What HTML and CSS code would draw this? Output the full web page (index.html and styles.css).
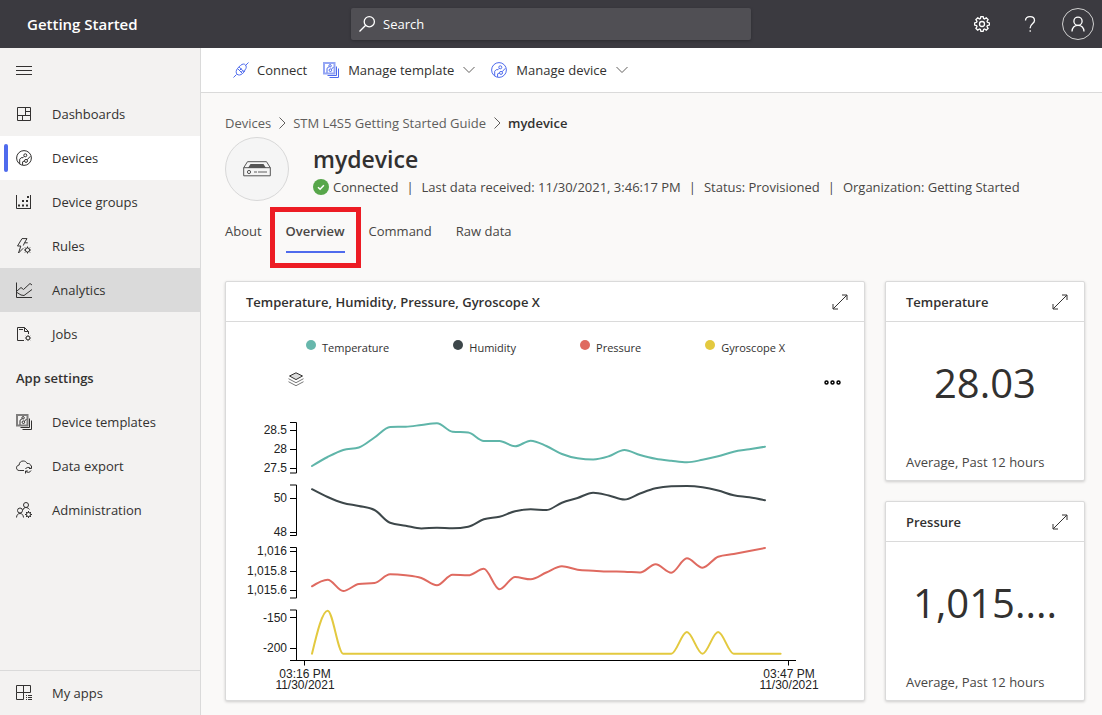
FILE: index.html
```
<!DOCTYPE html>
<html lang="en">
<head>
<meta charset="utf-8">
<title>Getting Started</title>
<meta name="viewport" content="width=device-width, initial-scale=1">
<link rel="stylesheet" href="styles.css">
</head>
<body>
<svg class="defs" aria-hidden="true">
  <symbol id="i-circuit" viewBox="0 0 16 16">
    <circle cx="8" cy="8" r="7.4"/><circle cx="9.3" cy="5.3" r="1.5"/><circle cx="10" cy="10.9" r="1.5"/>
    <path d="M8.2 6.4 7 7.7H5.2L3.7 9.2v4.9M11.1 9.8l3.2-3.5M6.6 15v-3.2l1.9-.9"/>
  </symbol>
  <symbol id="i-template" viewBox="0 0 16 16">
    <path d="M1 1h10.5v10.5H1z" class="thick"/>
    <circle cx="7.1" cy="3.8" r="1.2"/><circle cx="7.4" cy="8.2" r="1.3"/>
    <path d="M6.1 4.7 4 6.3v4.5M8.4 7.3l2.2-2.4M13.5 4.5v9h-9M15.5 6.5v9h-9"/>
  </symbol>
  <symbol id="i-gear" viewBox="0 0 16 16">
    <circle cx="8" cy="8" r="2.5"/>
    <path d="M6.900.500h2.200l.5 2 .9.4 1.800-1.100 1.800 1.800-1.100 1.800.4.9 2 .6v2.200l-2 .5-.4.9 1.100 1.800-1.800 1.800-1.800-1.100-.9.4-.5 2H6.900l-.5-2-.9-.4-1.800 1.100-1.800-1.800 1.100-1.800-.4-.9-2-.5V6.900l2-.6.4-.9-1.100-1.800 1.800-1.800 1.800 1.100.9-.4z"/>
  </symbol>
  <symbol id="i-minigear" viewBox="0 0 16 16">
    <circle cx="8" cy="8" r="4.2"/>
    <path d="M8 1v3M8 12v3M1 8h3M12 8h3M3 3l2 2M11 11l2 2M13 3l-2 2M5 11l-2 2"/>
  </symbol>
  <symbol id="i-expand" viewBox="0 0 16 16">
    <path d="M1.2 14.8 14.8 1.2M10 1h5v5M1 10v5h5"/>
  </symbol>
  <symbol id="i-down" viewBox="0 0 12 8"><path d="M.5 1 6 6.5 11.500 1"/></symbol>
  <symbol id="i-right" viewBox="0 0 8 12"><path d="M1.500.5 7 6 1.500 11.500"/></symbol>
</svg>

<header class="topbar">
  <div class="brand">Getting Started</div>
  <label class="search">
    <svg class="icon" viewBox="0 0 16 16" aria-hidden="true"><circle cx="10.300" cy="5.700" r="5.100"/><path d="M6.700 9.300.5 15.500"/></svg>
    <input type="search" placeholder="Search" aria-label="Search">
  </label>
  <div class="tools">
    <button class="tool" aria-label="Settings"><svg class="icon"><use href="#i-gear"/></svg></button>
    <button class="tool" aria-label="Help"><svg class="icon" viewBox="0 0 16 16"><path d="M3.500 4.500C3.600 2 5.400.6 8 .6s4.500 1.500 4.500 3.800c0 3.200-4.300 3.600-4.300 7.300v.6M8.200 14.200v1.600"/></svg></button>
    <button class="avatar" aria-label="Account"><svg class="icon" viewBox="0 0 16 16"><circle cx="8" cy="5.200" r="4.100"/><path d="M2 15.500c.2-3.900 2.600-6.200 6-6.200s5.800 2.300 6 6.200"/></svg></button>
  </div>
</header>

<div class="shell">
  <nav class="sidebar" aria-label="Main">
    <button class="nav-item" aria-label="Toggle navigation"><svg class="icon" viewBox="0 0 16 16"><path d="M0 4.500h16M0 8.500h16M0 12.500h16"/></svg></button>
    <a class="nav-item" href="#"><svg class="icon" viewBox="0 0 16 16"><path d="M1.500 1.500h13v13h-13zM9.500 1.500v8M1.500 9.500h13M9.500 5.500h5M6.500 9.500v5"/></svg>Dashboards</a>
    <a class="nav-item current" href="#" aria-current="page"><svg class="icon"><use href="#i-circuit"/></svg>Devices</a>
    <a class="nav-item" href="#"><svg class="icon" viewBox="0 0 16 16"><path d="M.5 1v13.500H15M14.500 1v13.500"/><path class="solid" d="M2 10.500h2v2H2zM6 10.500h2v2H6zM6 6h2v2H6zM10 10.500h2v2h-2zM10 6h2v2h-2zM11 2h2v2h-2z"/></svg>Device groups</a>
    <a class="nav-item" href="#"><svg class="icon" viewBox="0 0 16 16"><path d="M6 .6h5L8.500 4.800h3.200M6 .6 1.500 8h3.300L2.500 15l4.800-4.800M8.500 4.800 7.300 7.500"/><use href="#i-minigear" x="7.500" y="8" width="8" height="8" class="heavy"/></svg>Rules</a>
    <a class="nav-item hover" href="#"><svg class="icon" viewBox="0 0 16 16"><path d="M.5.5v15H16M1 9l4-3.500 2.500 2L14 1.500 16 3M1 10.500l4 2.500 3 .5 8-6"/></svg>Analytics</a>
    <a class="nav-item" href="#"><svg class="icon" viewBox="0 0 16 16"><path d="M8 14.500H1.500v-13h7l4 4V8M8.500 1.500v4h4M3 3.500h4"/><use href="#i-minigear" x="8.500" y="8.500" width="7" height="7" class="heavy"/></svg>Jobs</a>
    <h2 class="nav-heading">App settings</h2>
    <a class="nav-item" href="#"><svg class="icon"><use href="#i-template"/></svg>Device templates</a>
    <a class="nav-item" href="#"><svg class="icon" viewBox="0 0 16 16"><path d="M8 12.500H3.200C1.500 12.500.5 11.300.5 9.800s1.100-2.600 2.600-2.700C3.300 4.300 5 3 7.200 3c1.900 0 3.200.9 3.800 2.400 2.300-.1 3.600.9 4.200 2.600M9.500 11c.6-1.700 3.500-2.300 5-.8M15.500 8v2.500H13M15 12.500c-.7 2-3.500 2.500-5 1M9.500 15.500V13h2.400"/></svg>Data export</a>
    <a class="nav-item" href="#"><svg class="icon" viewBox="0 0 16 16"><circle cx="10" cy="3" r="2.500"/><circle cx="4" cy="8.500" r="2.500"/><path d="M.5 15.500c.2-2.600 1.500-4 3.500-4s3.300 1.400 3.500 4M6.500 8.500 8 6c2-.9 4-.6 5.500 1.500"/><use href="#i-minigear" x="8.500" y="8.500" width="8" height="8" class="heavy"/></svg>Administration</a>
    <a class="nav-item foot" href="#"><svg class="icon" viewBox="0 0 16 16"><path d="M.5 .5h14v7H.5zM.5 7.500v7h7V.5M10 10.500h1M12 10.500h4M10 12.500h1M12 12.500h4M10 14.500h1M12 14.500h4"/></svg>My apps</a>
  </nav>

  <main class="main">
    <div class="commands">
      <button class="command"><svg class="icon blue" viewBox="0 0 16 16"><path d="m.5 15.500 3-3M12.500 3.500l3-3M6 4.800 11.200 10M7.500 3.500c2-2 4-1.700 5-.5s1.200 3-.6 5M4.500 6.500l5 5M6 4.800 4.500 6.500C2.800 8.500 2.800 11 4 12.200s3.500 1.200 5.500-.7l1.700-1.500M7.500 3.500 6 4.800M11.900 8l-.7 2M6.500 8.500l2-2M8.200 10.200l2-2"/></svg>Connect</button>
      <button class="command"><svg class="icon blue"><use href="#i-template"/></svg>Manage template<svg class="down"><use href="#i-down"/></svg></button>
      <button class="command"><svg class="icon blue"><use href="#i-circuit"/></svg>Manage device<svg class="down"><use href="#i-down"/></svg></button>
    </div>

    <div class="content">
      <nav class="crumbs" aria-label="Breadcrumb">
        <a href="#">Devices</a><svg class="sep"><use href="#i-right"/></svg>
        <a href="#">STM L4S5 Getting Started Guide</a><svg class="sep"><use href="#i-right"/></svg>
        <span class="here">mydevice</span>
      </nav>
      <section class="device">
        <div class="picture"><svg viewBox="0 0 28 16" aria-hidden="true"><path d="M.7 6.700h26.600v8.100H.7zM.7 6.700 4.500.7h19l3.800 6"/><path class="solid" d="M7.500 3h13l2.500 4H5z"/><circle cx="6" cy="11" r="1.600"/><path d="M11 11h3M15 11h9" class="pale"/></svg></div>
        <div class="facts">
          <h1>mydevice</h1>
          <div class="status">
            <svg class="ok" viewBox="0 0 16 16" aria-hidden="true"><circle cx="8" cy="8" r="8"/><path d="m5 8.200 2.100 2 3.800-4"/></svg>
            <span>Connected</span><i>|</i><span>Last data received: 11/30/2021, 3:46:17 PM</span><i>|</i><span>Status: Provisioned</span><i>|</i><span>Organization: Getting Started</span>
          </div>
        </div>
      </section>
      <div class="tabs" role="tablist">
        <button class="tab" role="tab">About</button>
        <button class="tab active" role="tab" aria-selected="true">Overview</button>
        <button class="tab" role="tab">Command</button>
        <button class="tab" role="tab">Raw data</button>
      </div>

      <div class="tiles">
        <section class="tile wide">
          <header class="tile-head"><h2>Temperature, Humidity, Pressure, Gyroscope X</h2><button aria-label="Expand"><svg class="icon"><use href="#i-expand"/></svg></button></header>
          <ul class="legend">
            <li class="teal">Temperature</li><li class="slate">Humidity</li><li class="coral">Pressure</li><li class="gold">Gyroscope X</li>
          </ul>
          <div class="chart-tools">
            <button aria-label="Stack"><svg class="icon" viewBox="0 0 16 16"><path class="top" d="M8 .8 14.500 4 8 7.600 1.500 4z"/><path class="low" d="m.5 6.700 7.500 4 7.500-4M.5 9.700l7.500 4 7.500-4" /></svg></button>
            <button class="more" aria-label="More"><svg viewBox="0 0 17 5"><circle cx="2.500" cy="2.500" r="1.500"/><circle cx="8.500" cy="2.500" r="1.500"/><circle cx="14.500" cy="2.500" r="1.500"/></svg></button>
          </div>
          <svg class="chart" viewBox="226 410 638 290" role="img" aria-label="Sensor readings over time">
            <g class="axis">
              <path d="M290 422.500h6.500v50.500H290M290 430.500h6.500M290 449.500h6.500M290 468.500h6.500"/>
              <path d="M290 485h6.500v50.500H290M290 498.500h6.500M290 532.500h6.500"/>
              <path d="M290 547.500h6.500V598H290M290 551.500h6.500M290 571.500h6.500M290 590.500h6.500"/>
              <path d="M290 610h6.500v50.500M290 617.500h6.500M290 648.500h6.500M290 660.500h506M304.500 660.500v5M788.500 660.500v5"/>
            </g>
            <g class="ylabels">
              <text x="287" y="434">28.5</text><text x="287" y="453">28</text><text x="287" y="472">27.5</text>
              <text x="287" y="502">50</text><text x="287" y="536">48</text>
              <text x="287" y="555">1,016</text><text x="287" y="575">1,015.8</text><text x="287" y="594">1,015.6</text>
              <text x="287" y="622">-150</text><text x="287" y="652">-200</text>
            </g>
            <g class="xlabels">
              <text><tspan x="305" y="678">03:16 PM</tspan><tspan x="305" y="689">11/30/2021</tspan></text>
              <text><tspan x="789" y="678">03:47 PM</tspan><tspan x="789" y="689">11/30/2021</tspan></text>
            </g>
            <g class="lines"><path id="temperature"/><path id="humidity"/><path id="pressure"/><path id="gyroscope"/></g>
          </svg>
        </section>
        <section class="tile">
          <header class="tile-head"><h2>Temperature</h2><button aria-label="Expand"><svg class="icon"><use href="#i-expand"/></svg></button></header>
          <div class="value">28.03</div><p class="note">Average, Past 12 hours</p>
        </section>
        <section class="tile">
          <header class="tile-head"><h2>Pressure</h2><button aria-label="Expand"><svg class="icon"><use href="#i-expand"/></svg></button></header>
          <div class="value">1,015....</div><p class="note">Average, Past 12 hours</p>
        </section>
      </div>
    </div>
  </main>
</div>
<script src="chart.js"></script>
</body>
</html>
```
FILE: styles.css
```
* { box-sizing: border-box; }
body { margin: 0; height: 100vh; display: flex; flex-direction: column; overflow: hidden; font: 13px/20px "Open Sans", "Noto Sans", sans-serif; color: #323130; background: #faf9f8; }
button { font: inherit; color: inherit; background: none; border: 0; padding: 0; cursor: pointer; }
a { color: inherit; text-decoration: none; }
h1, h2, p, ul { margin: 0; padding: 0; font-size: inherit; }
svg { fill: none; stroke: currentColor; stroke-width: 1; flex: none; display: block; }
.defs { position: absolute; width: 0; height: 0; }
.icon { width: 16px; height: 16px; overflow: visible; }
.solid { fill: currentColor; stroke: none; }
.heavy { stroke-width: 2; }
.thick { stroke-width: 2; opacity: .6; }
.blue { color: #4f6bed; }

.topbar { flex: none; height: 48px; display: grid; grid-template-columns: 1fr minmax(0, 400px) 1fr; align-items: center; background: #3b3a40; color: #fff; }
.brand { padding-left: 27px; font-size: 15px; font-weight: 600; }
.search { display: flex; align-items: center; gap: 8px; height: 32px; padding: 0 8px; border-radius: 2px; background: #504f54; box-shadow: 0 1px 3px rgba(0,0,0,.25); }
.search .icon { stroke-width: 1.3; }
.search input { flex: 1; min-width: 0; padding: 0; border: 0; outline: 0; background: none; color: #fff; font: inherit; }
.search input::placeholder { color: #fff; opacity: 1; }
.tools { display: flex; justify-content: flex-end; align-items: center; height: 48px; padding-right: 8px; }
.tool { width: 48px; height: 48px; display: grid; place-items: center; }
.tool .icon, .avatar .icon { stroke-width: 1.3; }
.avatar { width: 32px; height: 32px; margin-left: 8px; border: 1px solid #d0d0d0; border-radius: 50%; display: grid; place-items: center; }

.shell { flex: 1; min-height: 0; display: flex; }
.sidebar { flex: none; width: 201px; display: flex; flex-direction: column; background: #f3f2f1; border-right: 1px solid #dadada; }
.nav-item { position: relative; flex: none; height: 44px; padding: 0 16px; display: flex; align-items: center; gap: 20px; }
.nav-item.current { background: #fff; font-weight: 500; }
.nav-item.current::before { content: ""; position: absolute; left: 4px; top: 8px; bottom: 8px; width: 4px; border-radius: 2px; background: #4f6bed; }
.nav-item.hover { background: #dadada; }
.nav-heading { height: 44px; padding: 12px 16px; font-weight: 600; }
.nav-item.foot { height: 45px; margin-top: auto; border-top: 1px solid #dadada; }

.main { flex: 1; min-width: 0; }
.commands { height: 45px; padding: 0 32px; display: flex; gap: 16px; background: #fff; border-bottom: 1px solid #dadada; }
.command { display: flex; align-items: center; gap: 8px; }
.command:not(:first-child) { gap: 9px; }
.down { width: 12px; height: 8px; color: #605e5c; }
.content { padding: 20px 17px 0 24px; }
.crumbs { display: flex; align-items: center; gap: 7px; color: #605e5c; }
.sep { width: 8px; height: 12px; }
.here { font-weight: 600; color: #323130; }
.device { display: flex; gap: 24px; margin-top: 4px; }
.picture { width: 64px; height: 64px; border: 1px solid #d8d8d8; border-radius: 50%; background: #f5f5f5; display: grid; place-items: center; color: #555; }
.picture svg { width: 28px; height: 16px; }
.pale { stroke: #aaa; stroke-width: 2; }
.facts { padding-top: 6px; }
h1 { font-size: 23px; line-height: 32px; font-weight: 600; }
.status { display: flex; align-items: center; gap: 8px; margin-top: 2px; white-space: nowrap; color: #484644; }
.status i { font-style: normal; }
.ok { width: 16px; height: 16px; margin-right: -4px; stroke: none; }
.ok circle { fill: #57a64a; }
.ok path { stroke: #fff; stroke-width: 1.500; }

.tabs { display: flex; gap: 24px; height: 44px; margin-top: 8px; }
.tab { position: relative; height: 44px; color: #484644; }
.tab.active { font-weight: 600; }
.tab.active::before { content: ""; position: absolute; left: 0; right: 0; bottom: 0; height: 2px; background: #4f6bed; }
.tab.active::after { content: ""; position: absolute; inset: -2px -16px -15px; border: 5px solid #ed1c24; }

.tiles { display: grid; grid-template-columns: minmax(0, 1fr) 200px; grid-template-rows: 200px 200px; gap: 20px; margin-top: 28px; }
.tile { background: #fff; border: 1px solid #dadada; border-radius: 2px; box-shadow: 0 1px 3px rgba(0,0,0,.18); display: flex; flex-direction: column; }
.wide { grid-row: span 2; }
.tile-head { height: 40px; padding: 0 16px 0 20px; display: flex; align-items: center; justify-content: space-between; border-bottom: 1px solid #dadada; }
.tile-head h2 { font-weight: 600; }
.value { flex: 1; display: grid; place-items: center; padding-bottom: 8px; font-size: 40px; line-height: 48px; }
.note { padding: 0 20px 8px; color: #484644; }
.legend { display: flex; gap: 64px; padding: 16px 0 0 80px; list-style: none; font-size: 11px; line-height: 20px; }
.legend li { display: flex; gap: 6px; }
.legend li::before { content: ""; width: 10px; height: 10px; margin-top: 2px; border-radius: 50%; background: var(--tone); }
.teal { --tone: #67b7ac; } .slate { --tone: #3d474a; } .coral { --tone: #df6a60; } .gold { --tone: #e3c93f; }
.chart-tools { display: flex; justify-content: space-between; align-items: center; padding: 14px 23px 0 62px; }
.chart-tools .top { fill: #ddd; }
.chart-tools .low { stroke: #777; }
.more { padding-top: 4px; color: #000; }
.more svg { width: 17px; height: 5px; stroke-width: 1.500; }
.chart { width: 100%; margin-top: auto; }
.axis { stroke: #000; }
.chart text { fill: #222; stroke: none; font: 12px "Liberation Sans", Arial, sans-serif; }
.ylabels { text-anchor: end; }
.xlabels { text-anchor: middle; }
.lines { stroke-width: 2; stroke-linecap: round; }
#temperature { stroke: #5fb5a9; } #humidity { stroke: #3d474a; } #pressure { stroke: #df6a60; } #gyroscope { stroke: #e3c93f; }
```
FILE: chart.js
```
const START = 312, STEP = 15.62;

const series = {
  temperature: [466, 457, 450, 447.5, 437.5, 427, 426.7, 425, 423.2, 431.7, 432.5, 441, 441, 446.3, 440.7, 446, 454, 458.3, 459.5, 456.3, 450, 455, 458.8, 460.8, 462.3, 459.8, 456.3, 451.7, 449.3, 446.7],
  humidity: [489.2, 497, 503, 506, 510, 522.8, 525.7, 528.5, 527.7, 528.3, 526.7, 519.3, 516.7, 511.3, 509.3, 510, 502.7, 498, 492.7, 495.5, 499.5, 493.5, 488.3, 486.3, 486, 487.2, 490.5, 495.3, 497.3, 500.3],
  pressure: [586.3, 579.7, 591, 584, 583, 574.3, 575.3, 578, 585.3, 574.8, 575.3, 568.8, 589.3, 577, 579.3, 572.5, 566.3, 569.7, 570.7, 571.5, 571.7, 572.5, 564.3, 572.7, 558.3, 567.7, 556.7, 554, 551, 548],
  gyroscope: [653.7, 610.7, ...Array(22).fill(653.7), 632, 653.7, 632, 653.7, 653.7, 653.7, 653.7]
};

// Monotone cubic interpolation on evenly spaced samples.
function linePath(ys) {
  const n = ys.length;
  const slope = i => (ys[i + 1] - ys[i]) / STEP;
  const tangent = ys.map((_, i) => {
    if (i === 0 || i === n - 1) return null;
    const a = slope(i - 1), b = slope(i);
    if (a * b <= 0) return 0;
    return Math.sign(a) * Math.min(Math.abs(a), Math.abs(b), Math.abs(a + b) / 4) * 2;
  });
  tangent[0] = (3 * slope(0) - tangent[1]) / 2;
  tangent[n - 1] = (3 * slope(n - 2) - tangent[n - 2]) / 2;
  let d = `M${START} ${ys[0]}`;
  for (let i = 1; i < n; i++) {
    const x = START + i * STEP, h = STEP / 3;
    d += `C${x - 2 * h} ${ys[i - 1] + h * tangent[i - 1]} ${x - h} ${ys[i] - h * tangent[i]} ${x} ${ys[i]}`;
  }
  return d;
}

for (const [id, ys] of Object.entries(series)) {
  document.getElementById(id).setAttribute("d", linePath(ys));
}
```
